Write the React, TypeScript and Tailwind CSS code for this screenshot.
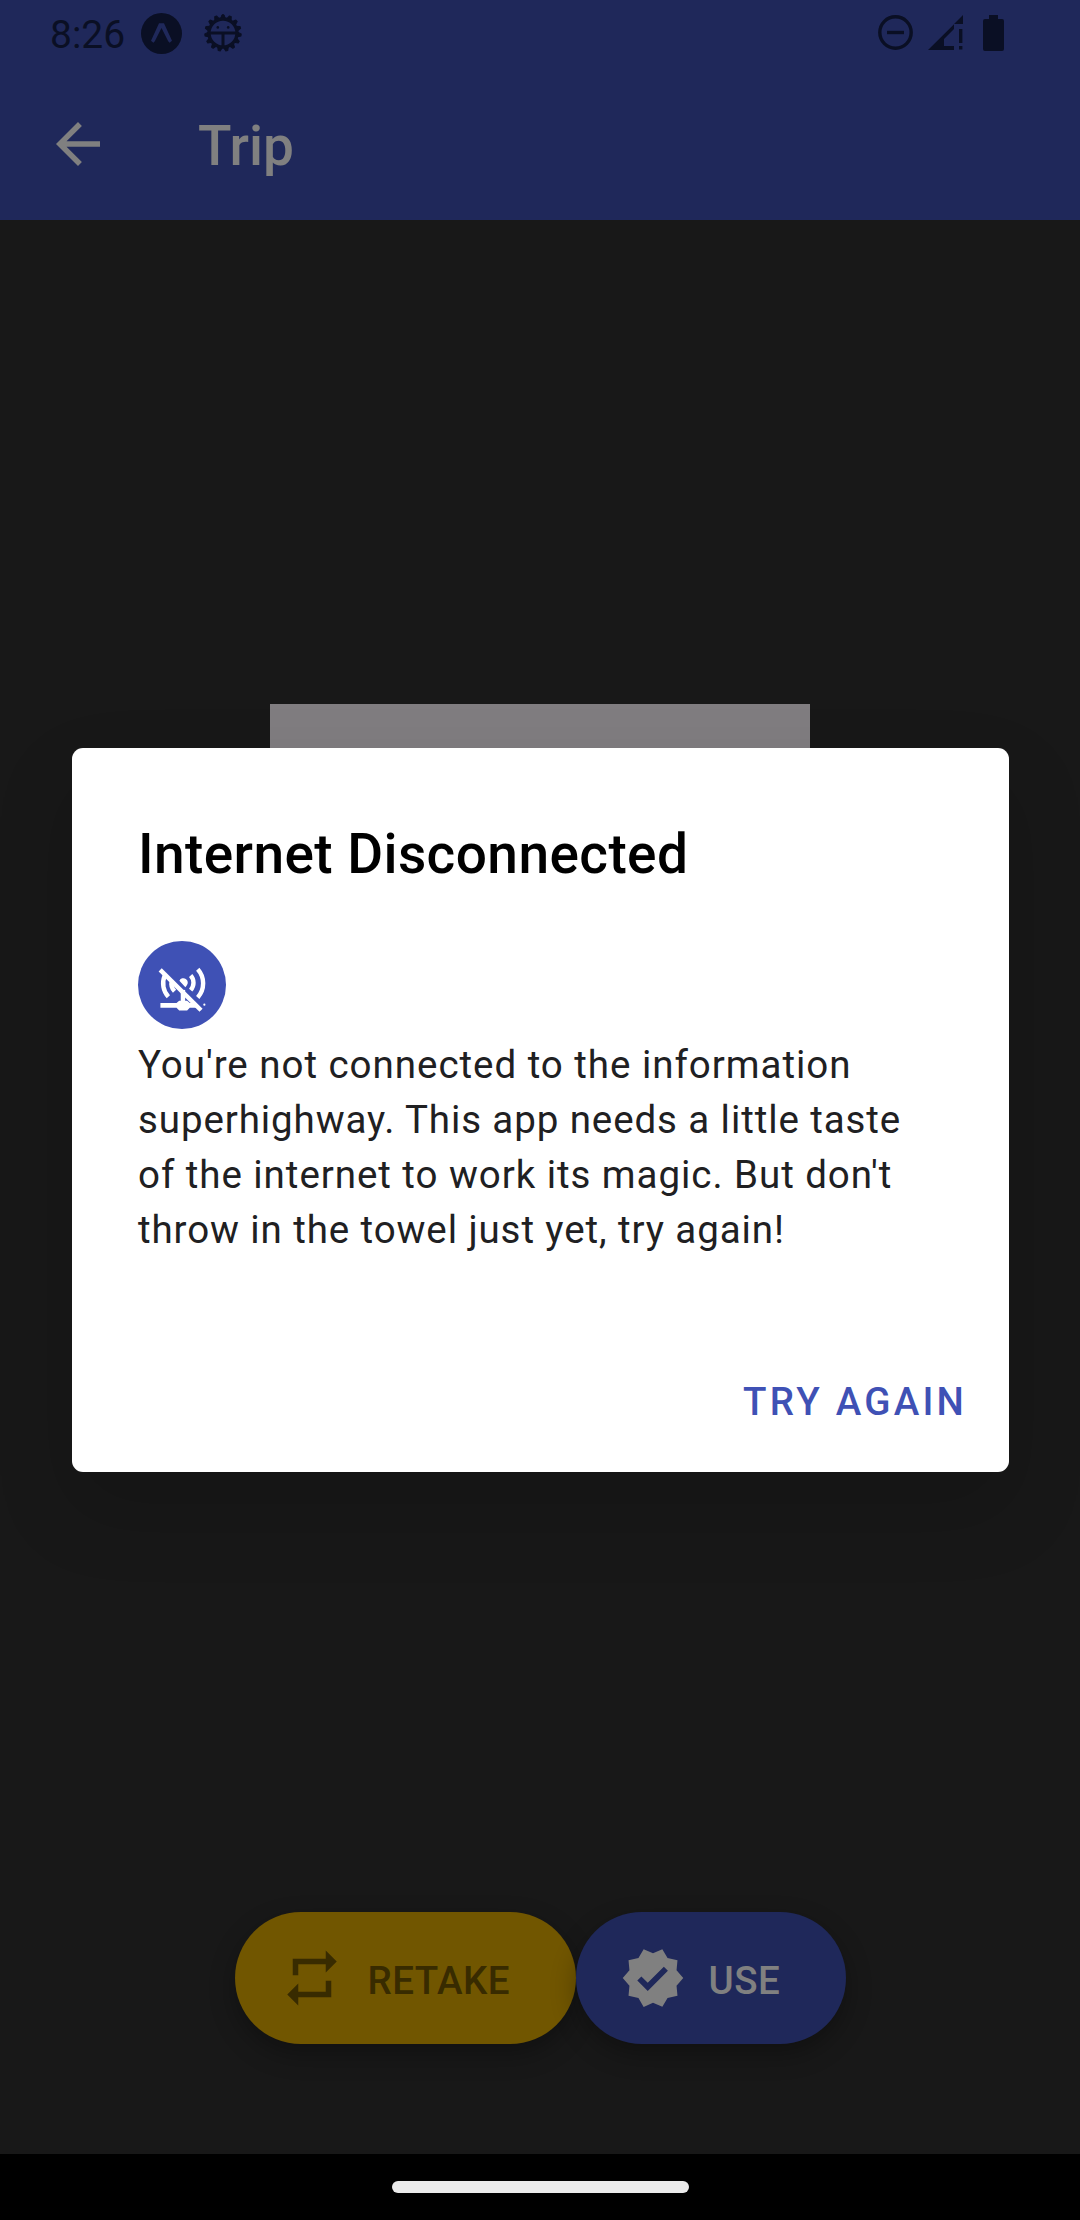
import { MdArrowBack, MdRepeat, MdVerified } from "react-icons/md";

const gearTeeth = Array.from({ length: 15 }, (_, i) => i * 24 + 12);

function DebugIcon() {
  return (
    <svg className="ml-[21px] size-[40px]" viewBox="-20 -20 40 40" fill="none" stroke="currentColor">
      {gearTeeth.map((a) => (
        <path key={a} d="M-2.5 14 L-1 18.2 H1 L2.5 14 Z" fill="currentColor" strokeWidth="1" strokeLinejoin="round" transform={`rotate(${a})`} />
      ))}
      <circle r="14" strokeWidth="3.3" />
      <path d="M-14 0H14" strokeWidth="3" />
      <path d="M0 0V14" strokeWidth="3" />
      <circle cx="-5.2" cy="-5.6" r="1.3" fill="currentColor" stroke="none" />
      <circle cx="5.2" cy="-5.6" r="1.3" fill="currentColor" stroke="none" />
    </svg>
  );
}

function StatusBar() {
  return (
    <div className="flex h-[66px] items-start pl-[50px] pr-[76px] pt-[13px] text-[#0a0f24]">
      <span className="mt-px w-[76px] text-[39px] leading-[42px]">8:26</span>
      <svg className="ml-[15px] size-[41px]" viewBox="0 0 41 41">
        <circle cx="20.5" cy="20.5" r="20.5" fill="currentColor" />
        <path d="M18 10.3h5l8 17.4-2.4 2.1-1.4-1.5L20.5 15 13.8 28.3l-1.4 1.5-2.4-2.1z" fill="#1f285a" />
      </svg>
      <DebugIcon />
      <div className="ml-auto flex pt-[2px]">
        <svg className="size-[35px]" viewBox="0 0 35 35" fill="none" stroke="currentColor">
          <circle cx="17.5" cy="17.5" r="15.7" strokeWidth="3.4" />
          <path d="M9 17.5h17" strokeWidth="3.4" />
        </svg>
        <svg className="ml-[15px] size-[35px]" viewBox="0 0 35 35" fill="currentColor">
          <path d="M0 35 26 9.3V14L16 24v7h10v4zM26 9 35 0v9zM31 14h3.4v14H31zM31 31h3.4v3.6H31z" />
        </svg>
        <svg className="ml-[20px] h-[36px] w-[21px]" viewBox="0 0 21 36" fill="currentColor">
          <path d="M6 0h9v4h4a2 2 0 0 1 2 2v28a2 2 0 0 1-2 2H2a2 2 0 0 1-2-2V6a2 2 0 0 1 2-2h4z" />
        </svg>
      </div>
    </div>
  );
}

function NetworkOffIcon() {
  return (
    <svg className="size-[53px]" viewBox="0 0 24 24" fill="none" stroke="white" strokeWidth="2">
      <path d="M3.9 7.6a9 9 0 0 0 1.7 9.5" />
      <path d="M7.2 9.8a5 5 0 0 0 1.2 4.8" />
      <path d="M15.7 7.5a4.9 4.9 0 0 1 0 6.6" />
      <path d="M18.9 4.6a9.6 9.6 0 0 1 0 12.8" />
      <g fill="white" stroke="none">
        <path d="M10.6 9.8a2 2 0 1 1 3.3 2.2l-.6.8z" />
        <path d="M2 19.9h7.3l1.2-1h3.6l1.2 1h3v2.2h-3l-1.2 1.2h-3.6l-1.2-1.2H2z" />
        <circle cx="21.9" cy="20.7" r=".5" />
      </g>
      <path d="M12.2 14v6" />
      <path d="M1.9 4.9 20.4 23.2" />
    </svg>
  );
}

function Dialog() {
  return (
    <div className="absolute left-[72px] top-[748px] flex h-[724px] w-[937px] flex-col rounded-[11px] bg-white px-[66px] shadow-[0_36px_80px_rgba(0,0,0,0.16)]">
      <h2 className="mb-[54px] mt-[73px] text-[55px] font-medium leading-[66px] tracking-[0.41px] text-black">Internet Disconnected</h2>
      <div className="flex size-[88px] items-center justify-center rounded-full bg-[#3f51b5]">
        <NetworkOffIcon />
      </div>
      <p className="mt-[8px] whitespace-nowrap text-[38.5px] leading-[55px] text-[#202022]">
        <span className="tracking-[0.97px]">You're not connected to the information</span><br />
        <span className="tracking-[0.9px]">superhighway. This app needs a little taste</span><br />
        <span className="tracking-[0.95px]">of the internet to work its magic. But don't</span><br />
        <span className="tracking-[0.9px]">throw in the towel just yet, try again!</span>
      </p>
      <button className="-mr-[24px] mb-[44px] mt-auto self-end text-[38.5px] font-medium leading-[52px] tracking-[3.2px] text-[#3f51b5]">TRY AGAIN</button>
    </div>
  );
}

export default function App() {
  return (
    <div className="relative flex h-[2220px] w-[1080px] flex-col overflow-hidden bg-[#181818] font-['Roboto',sans-serif]">
      <header className="h-[220px] bg-[#1f285a]">
        <StatusBar />
        <div className="flex h-[154px] items-center pl-[45px] pt-[2px] text-[#808080]">
          <MdArrowBack className="size-[66px]" />
          <h1 className="ml-[87px] pt-[4px] text-[55px] font-medium leading-[66px]">Trip</h1>
        </div>
      </header>
      <main className="flex flex-1 flex-col items-center">
        <div className="mt-[484px] h-[540px] w-[540px] bg-[#807d80]" />
        <div className="mb-[110px] mt-auto flex h-[132px] text-[38.5px] font-medium">
          <button className="flex w-[341px] items-center rounded-full bg-[#715600] pl-[44px] text-[#382b00] shadow-[0_10px_26px_rgba(0,0,0,0.3)]">
            <MdRepeat className="size-[66px]" />
            <span className="ml-[23px] pt-[5px] tracking-[0.45px]">RETAKE</span>
          </button>
          <button className="flex w-[270px] items-center rounded-full bg-[#1f285a] pl-[44px] text-[#808080] shadow-[0_10px_26px_rgba(0,0,0,0.3)]">
            <MdVerified className="size-[66px]" />
            <span className="ml-[23px] pt-[5px] tracking-[0.45px]">USE</span>
          </button>
        </div>
      </main>
      <footer className="flex h-[66px] items-center justify-center bg-black">
        <div className="h-[12px] w-[297px] rounded-full bg-[#ebebeb]" />
      </footer>
      <Dialog />
    </div>
  );
}
